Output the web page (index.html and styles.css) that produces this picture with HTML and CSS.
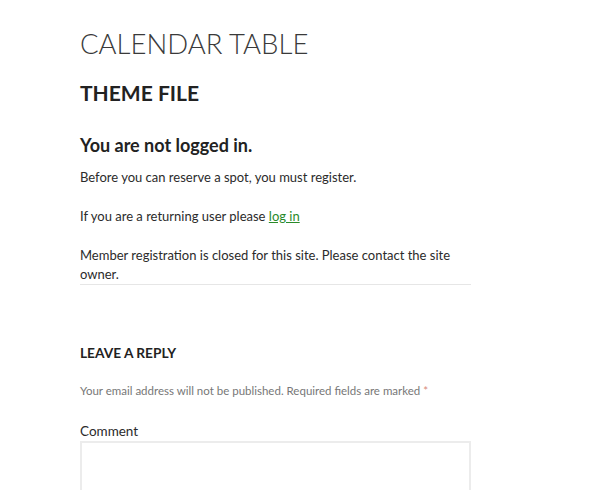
FILE: index.html
```html
<!DOCTYPE html>
<html lang="en">
<head>
    <meta charset="UTF-8">
    <meta name="viewport" content="width=device-width, initial-scale=1.0">
    <title>Calendar Table</title>
    <link rel="stylesheet" href="styles.css">
</head>
<body>
    <div class="site">
        <h1 class="page-title">CALENDAR TABLE</h1>
        <h2 class="entry-title">THEME FILE</h2>

        <div class="entry-content">
            <h3 class="notice-title">You are not logged in.</h3>
            <p>Before you can reserve a spot, you must register.</p>
            <p>If you are a returning user please <a href="#">log in</a></p>
            <p class="last">Member registration is closed for this site. Please contact the site owner.</p>
        </div>

        <div class="comments">
            <h3 class="reply-title">LEAVE A REPLY</h3>
            <p class="comment-notes">Your email address will not be published. Required fields are marked <span class="required">*</span></p>
            <label for="comment">Comment</label>
            <textarea id="comment" rows="8"></textarea>
        </div>
    </div>
</body>
</html>
```

FILE: styles.css
```css
body {
    margin: 0;
    font-family: Lato, 'Open Sans', sans-serif;
    background-color: #fff;
    color: #2b2b2b;
}
.site {
    width: 391px;
    margin-left: 80px;
    padding-top: 27px;
}
.page-title {
    font-size: 27.5px;
    font-weight: 300;
    line-height: 1.2;
    color: #3a3a3a;
    margin: 0 0 20px;
}
.entry-title {
    font-size: 21px;
    font-weight: 700;
    line-height: 1.2;
    color: #222;
    margin: 0 0 30px;
}
.entry-content {
    border-bottom: 1px solid #e6e6e6;
}
.notice-title {
    font-size: 18px;
    font-weight: 700;
    line-height: 1.2;
    color: #222;
    margin: 0 0 11px;
}
.entry-content p {
    font-size: 13px;
    line-height: 19px;
    margin: 0 0 20px;
}
.entry-content p.last {
    margin-bottom: 0;
}
.entry-content a {
    color: #2a8a2a;
    text-decoration: underline;
}
.comments {
    padding-top: 58px;
}
.reply-title {
    font-size: 13.7px;
    font-weight: 700;
    line-height: 19px;
    color: #222;
    margin: 0 0 19px;
}
.comment-notes {
    font-size: 11.5px;
    line-height: 19px;
    color: #777;
    margin: 0 0 22px;
}
.required {
    color: #d98b7c;
}
label {
    display: block;
    font-size: 13.5px;
    line-height: 19px;
    color: #2b2b2b;
}
textarea {
    display: block;
    width: 100%;
    height: 120px;
    box-sizing: border-box;
    border: 2px solid #ececec;
    margin: 0;
    resize: none;
}
```
